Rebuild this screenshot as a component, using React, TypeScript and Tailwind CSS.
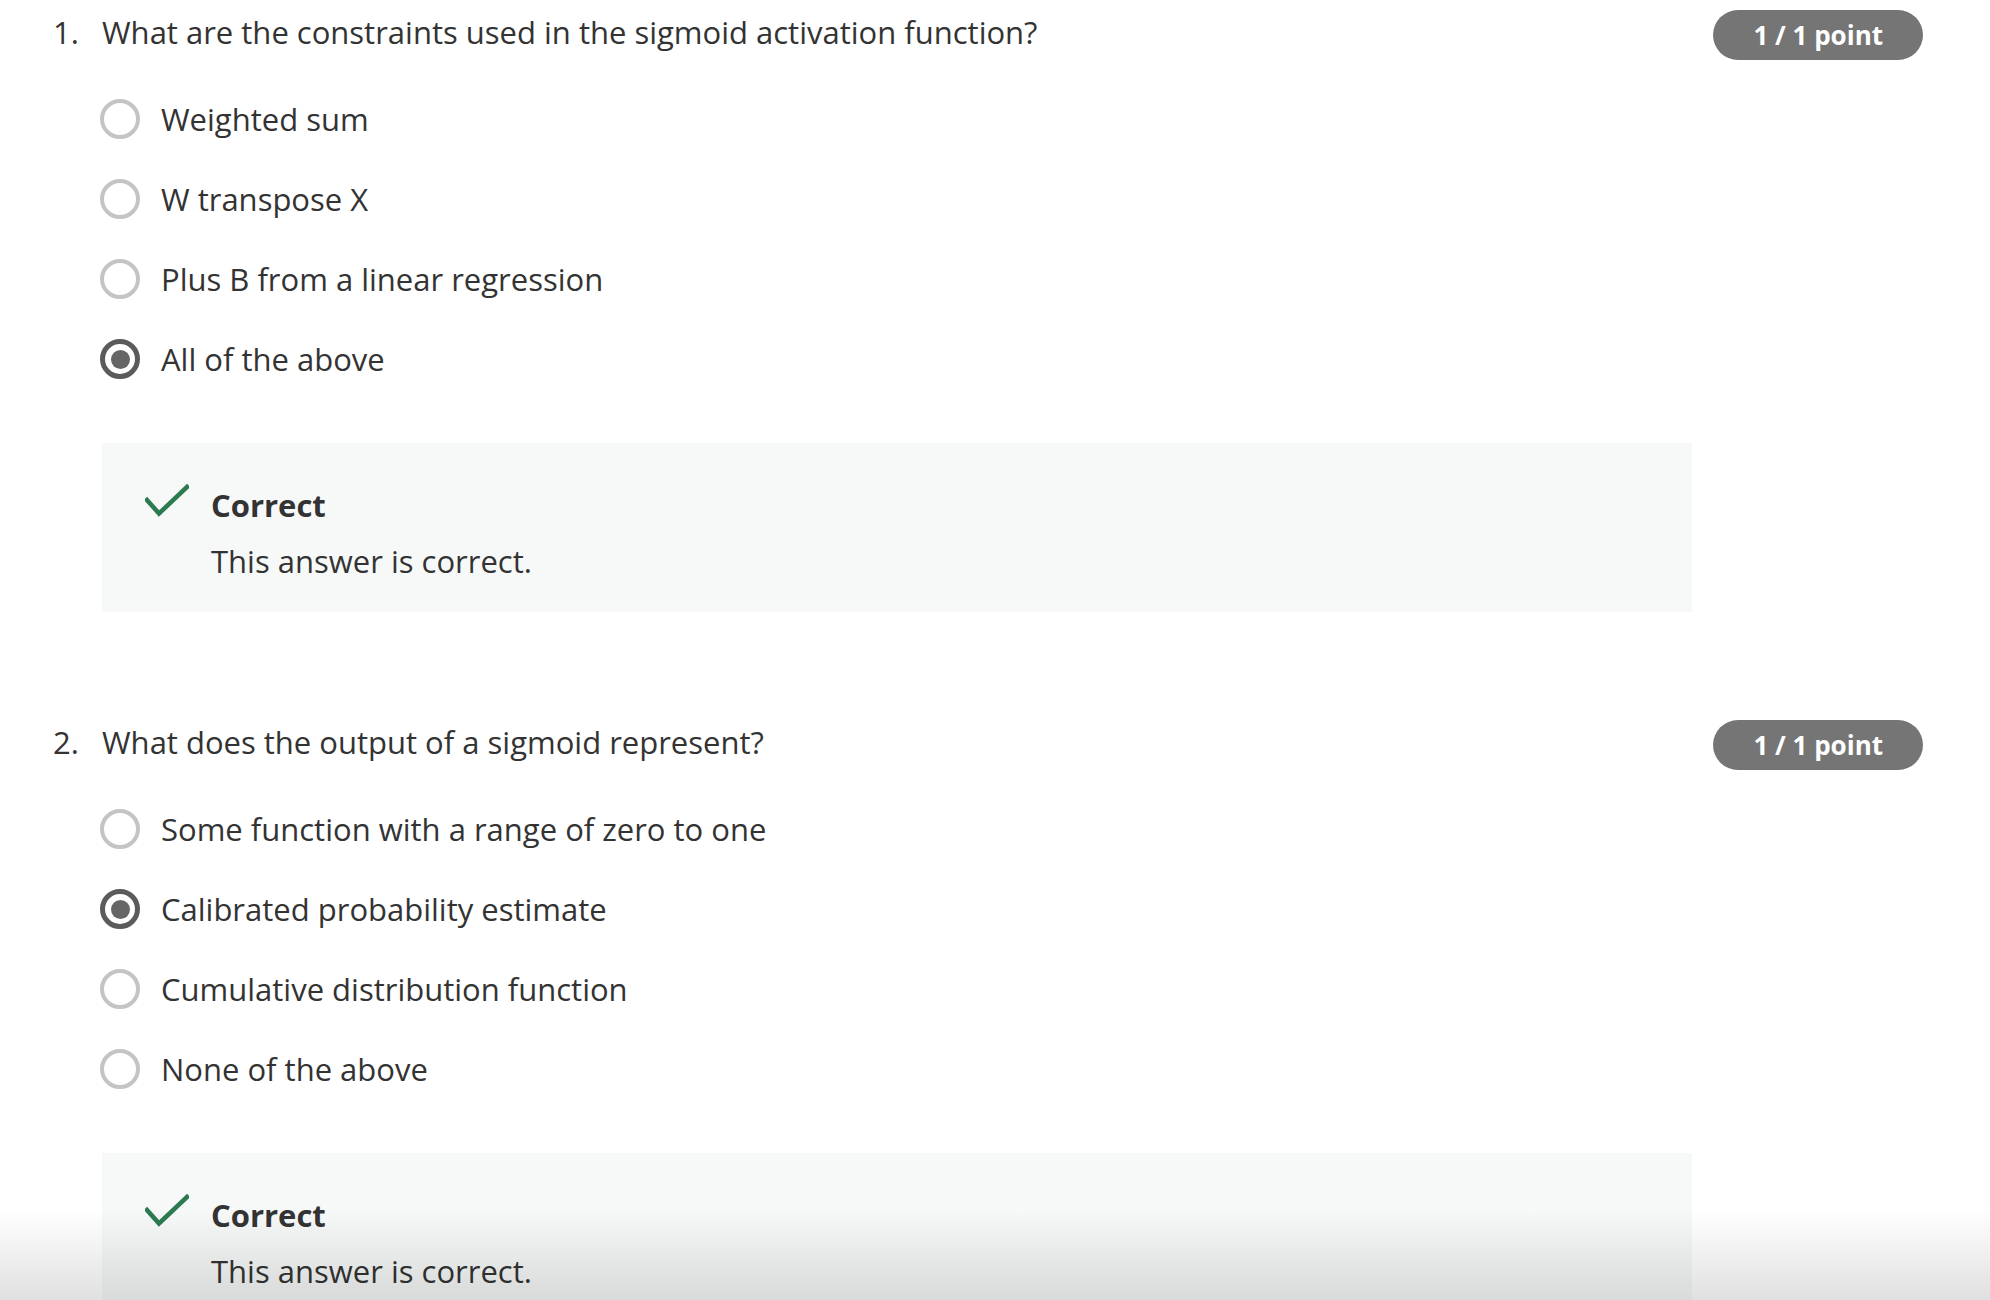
type Question = {
  number: number;
  text: string;
  options: string[];
  selected: number;
};

const questions: Question[] = [
  {
    number: 1,
    text: "What are the constraints used in the sigmoid activation function?",
    options: ["Weighted sum", "W transpose X", "Plus B from a linear regression", "All of the above"],
    selected: 3,
  },
  {
    number: 2,
    text: "What does the output of a sigmoid represent?",
    options: [
      "Some function with a range of zero to one",
      "Calibrated probability estimate",
      "Cumulative distribution function",
      "None of the above",
    ],
    selected: 1,
  },
];

const Radio = ({ checked }: { checked: boolean }) =>
  checked ? (
    <div className="w-[40px] h-[40px] shrink-0 rounded-full border-[5px] border-[#5b5b5b] flex items-center justify-center">
      <div className="w-[19px] h-[19px] rounded-full bg-[#666666]" />
    </div>
  ) : (
    <div className="w-[40px] h-[40px] shrink-0 rounded-full border-[4px] border-[#c4c4c4]" />
  );

const CheckIcon = () => (
  <svg width="44" height="34" viewBox="0 0 44 34" fill="none" className="-mt-[2px]">
    <path d="M2 17 L14 30.5 L42 4" stroke="#2c7a4f" strokeWidth="4.5" strokeLinecap="square" />
  </svg>
);

const QuestionBlock = ({ q }: { q: Question }) => (
  <div>
    <div className="flex items-start justify-between">
      <div className="flex mt-[2px] text-[31px] leading-[40px] text-[#333333]">
        <span className="w-[49px]">{q.number}.</span>
        <span>{q.text}</span>
      </div>
      <div className="h-[50px] px-[40px] rounded-full bg-[#757575] text-white font-bold text-[26px] flex items-center">
        1 / 1 point
      </div>
    </div>

    <div className="mt-[19px] pl-[47px]">
      {q.options.map((opt, i) => (
        <div key={opt} className="h-[80px] flex items-center gap-[21px]">
          <Radio checked={i === q.selected} />
          <span className="text-[31px] leading-[40px] text-[#333333]">{opt}</span>
        </div>
      ))}
    </div>

    <div className="mt-[44px] ml-[49px] w-[1590px] h-[169px] bg-[#f7f9f9] pl-[43px] pt-[42px] flex">
      <div className="w-[66px]">
        <CheckIcon />
      </div>
      <div className="text-[31px] leading-[40px] text-[#333333]">
        <p className="font-bold">Correct</p>
        <p className="mt-[16px]">This answer is correct.</p>
      </div>
    </div>
  </div>
);

export default function App() {
  return (
    <div className="relative min-h-screen bg-white font-['Open_Sans',sans-serif] overflow-hidden">
      <div className="pl-[53px] pr-[67px] pt-[10px] flex flex-col gap-[108px]">
        {questions.map((q) => (
          <QuestionBlock key={q.number} q={q} />
        ))}
      </div>
      <div className="pointer-events-none fixed inset-x-0 bottom-0 h-[90px] mix-blend-multiply bg-linear-to-b from-white to-[#e0e0e0]" />
    </div>
  );
}
